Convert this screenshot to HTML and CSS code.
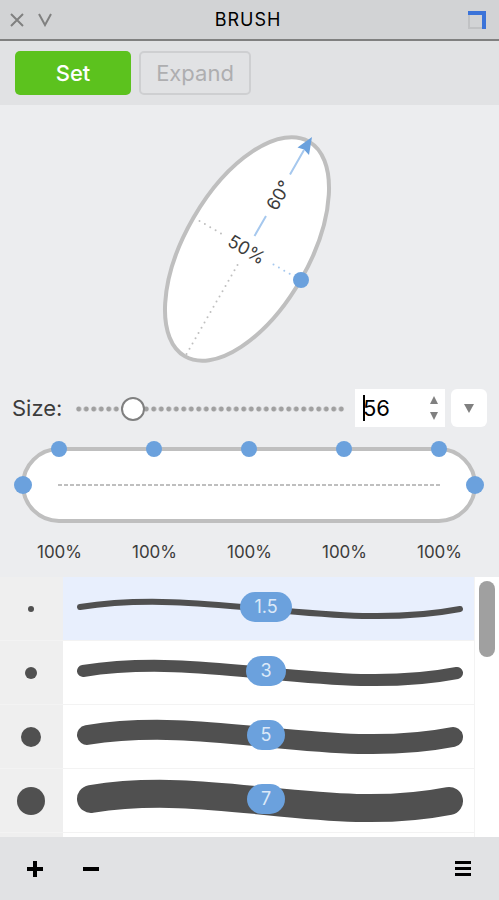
FILE: index.html
```html
<!DOCTYPE html>
<html lang="en">

<head>
    <meta charset="UTF-8">
    <meta name="viewport" content="width=device-width, initial-scale=1.0">
    <title>Brush</title>

    <link rel="stylesheet" href="styles.css">
</head>

<body>
    <header id="titlebar">
        <div class="window_btns">
            <button aria-label="Close">
                <svg width="14" height="14" viewBox="0 0 14 14"><path d="M1 1L13 13M13 1L1 13"/></svg>
            </button>
            <button aria-label="Collapse">
                <svg width="14" height="14" viewBox="0 0 14 14"><path d="M1 1L7 12L13 1"/></svg>
            </button>
        </div>
        <h1>BRUSH</h1>
        <button class="dock_btn" aria-label="Dock">
            <svg width="18" height="18" viewBox="0 0 18 18">
                <path d="M0 4h2v12h12v2H0z" fill="#c1c2c4"/>
                <path d="M0 0h18v18h-4V4H0z" fill="#3b73d9"/>
            </svg>
        </button>
    </header>

    <div id="toolbar">
        <button class="btn_set">Set</button>
        <button class="btn_expand" disabled>Expand</button>
    </div>

    <main>
        <svg id="shape" width="199" height="240" viewBox="0 0 199 240">
            <ellipse cx="97" cy="120" rx="124" ry="62" transform="rotate(-60 97 120)" fill="#fff" stroke="#bfbfbf" stroke-width="4"/>
            <g fill="none" stroke-width="2" stroke-linecap="round">
                <path d="M87.5 136L36.5 225" stroke="#bfbfbf" stroke-dasharray="0 6.03"/>
                <path d="M49.5 92L72 105" stroke="#bfbfbf" stroke-dasharray="0 6.2"/>
                <path d="M123.5 135.500L141 145.500" stroke="#a6c8ee" stroke-dasharray="0 6.2"/>
            </g>
            <path d="M104.500 107L116 87M140 45.500L154 21" stroke="#a6c8ee" stroke-width="2"/>
            <path d="M162 8L147.500 18.500L154 20.500L159 26z" fill="#6ba1dd"/>
            <circle cx="151" cy="151" r="8" fill="#6ba1dd"/>
            <text x="128" y="66" transform="rotate(-60 128 66)" dy="7">60°</text>
            <text x="97" y="120" transform="rotate(30 97 120)" dy="7">50%</text>
        </svg>

        <div id="size_row">
            <label for="size_range">Size:</label>
            <input type="range" id="size_range" min="0" max="300" value="56">
            <div class="size_box">
                <span class="caret"></span>
                <input type="text" id="size_value" value="56" aria-label="Size value">
                <div class="stepper">
                    <button aria-label="Increase"><svg width="10" height="8" viewBox="0 0 10 8"><path d="M5 0L9 8H1z"/></svg></button>
                    <button aria-label="Decrease"><svg width="10" height="8" viewBox="0 0 10 8"><path d="M1 0H9L5 8z"/></svg></button>
                </div>
            </div>
            <button class="btn_more" aria-label="Size presets"><svg width="10" height="9" viewBox="0 0 10 9"><path d="M0 0H10L5 9z"/></svg></button>
        </div>

        <div id="profile">
            <div class="top_handles"><i></i><i></i><i></i><i></i><i></i></div>
            <i class="end_handle left"></i>
            <div class="midline"></div>
            <i class="end_handle right"></i>
        </div>
        <div id="profile_values">
            <span>100%</span>
            <span>100%</span>
            <span>100%</span>
            <span>100%</span>
            <span>100%</span>
        </div>
    </main>

    <div id="brushes">
        <ul>
            <li class="selected">
                <div class="tip"><svg width="44" height="44"><circle cx="22" cy="22" r="3"/></svg></div>
                <div class="stroke">
                    <svg viewBox="0 0 411 63"><path d="M17 30C144 10 271 56 397 32" stroke-width="6"/></svg>
                    <span>1.5</span>
                </div>
            </li>
            <li>
                <div class="tip"><svg width="44" height="44"><circle cx="22" cy="22" r="6"/></svg></div>
                <div class="stroke">
                    <svg viewBox="0 0 411 63"><path d="M20 30C146 10 269 56 394 32" stroke-width="12"/></svg>
                    <span>3</span>
                </div>
            </li>
            <li>
                <div class="tip"><svg width="44" height="44"><circle cx="22" cy="22" r="10"/></svg></div>
                <div class="stroke">
                    <svg viewBox="0 0 411 63"><path d="M24 30C148 10 267 56 390 32" stroke-width="20"/></svg>
                    <span>5</span>
                </div>
            </li>
            <li>
                <div class="tip"><svg width="44" height="44"><circle cx="22" cy="22" r="14"/></svg></div>
                <div class="stroke">
                    <svg viewBox="0 0 411 63"><path d="M28 30C150 10 265 56 386 32" stroke-width="28"/></svg>
                    <span>7</span>
                </div>
            </li>
            <li>
                <div class="tip"><svg width="44" height="44"><circle cx="22" cy="22" r="20"/></svg></div>
                <div class="stroke">
                    <svg viewBox="0 0 411 63"><path d="M34 30C152 10 263 56 380 32" stroke-width="41"/></svg>
                </div>
            </li>
        </ul>
        <div class="scrollbar"><div class="thumb"></div></div>
    </div>

    <footer>
        <button aria-label="Add brush"><svg width="16" height="16" viewBox="0 0 16 16"><path d="M6 0h4v6h6v4h-6v6H6v-6H0V6h6z"/></svg></button>
        <button aria-label="Remove brush"><svg width="16" height="16" viewBox="0 0 16 16"><path d="M0 6h16v4H0z"/></svg></button>
        <button class="btn_menu" aria-label="Menu"><svg width="16" height="16" viewBox="0 0 16 16"><path d="M0 0h16v3H0zM0 6h16v3H0zM0 12h16v3H0z"/></svg></button>
    </footer>
</body>

</html>
```
FILE: styles.css
```css
* {
    box-sizing: border-box;
}

body {
    display: flex;
    flex-direction: column;
    margin: 0;
    height: 100vh;
    font-family: Inter, "Liberation Sans", sans-serif;
    background-color: #ecedef;
    color: #3c3c3c;
}

button {
    display: flex;
    align-items: center;
    justify-content: center;
    padding: 0;
    border: none;
    background: none;
    font-family: inherit;
}

#titlebar {
    display: grid;
    grid-template-columns: 1fr auto 1fr;
    align-items: center;
    height: 41px;
    padding: 0 13px 0 10px;
    background-color: #d2d3d5;
    border-bottom: 2px solid #808080;
}

#titlebar h1 {
    margin: 0;
    font-size: 18px;
    font-weight: 400;
    letter-spacing: 1px;
    color: black;
}

.window_btns {
    display: flex;
    gap: 14px;
}

.window_btns path {
    fill: none;
    stroke: #808080;
    stroke-width: 2;
}

.dock_btn {
    justify-self: end;
}

#toolbar {
    display: flex;
    gap: 8px;
    height: 64px;
    padding: 10px 15px;
    background-color: #e1e2e4;
}

#toolbar button {
    height: 44px;
    border-radius: 5px;
    font-size: 22px;
}

#toolbar .btn_set {
    width: 116px;
    background-color: #5cc21e;
    color: white;
    font-weight: 500;
}

#toolbar .btn_expand {
    width: 112px;
    border: 2px solid #cecfd1;
    color: #aeaeb0;
}

#shape {
    display: block;
    margin: 24px auto 20px;
}

#shape text {
    font-size: 18px;
    text-anchor: middle;
    fill: #3c3c3c;
}

#size_row {
    display: flex;
    align-items: center;
    height: 38px;
    padding: 0 12px;
}

#size_row label {
    width: 63px;
    font-size: 22px;
}

#size_range {
    flex: 1;
    min-width: 0;
    height: 24px;
    margin: 1px 10px 0 0;
    appearance: none;
    background: radial-gradient(circle, #a0a0a0 2px, transparent 3px) 0 0 / calc(100% / 36) 100%;
}

#size_range::-webkit-slider-thumb {
    appearance: none;
    width: 24px;
    height: 24px;
    border: 2px solid #808080;
    border-radius: 50%;
    background-color: white;
}

.size_box {
    position: relative;
    display: flex;
    width: 90px;
    height: 38px;
    margin-right: 6px;
    background-color: white;
}

#size_value {
    flex: 1;
    min-width: 0;
    padding: 0 0 0 8px;
    border: none;
    background: none;
    font-family: inherit;
    font-size: 22px;
    color: black;
}

.caret {
    position: absolute;
    left: 8px;
    top: 6px;
    width: 2px;
    height: 26px;
    background-color: black;
}

.stepper {
    display: flex;
    flex-direction: column;
    justify-content: center;
    gap: 8px;
    width: 22px;
}

.stepper path,
.btn_more path {
    fill: #808080;
}

.btn_more {
    width: 36px;
    height: 38px;
    border-radius: 6px;
    background-color: white;
}

#profile {
    position: relative;
    display: flex;
    align-items: center;
    height: 76px;
    margin: 20px 22px 0 21px;
    padding: 0 33px;
    border: 4px solid #bfbfbf;
    border-radius: 38px;
    background-color: white;
}

.midline {
    flex: 1;
    height: 2px;
    background: repeating-linear-gradient(to right, #bfbfbf 0 4px, transparent 4px 6px);
}

/* width handles sit on the outline */
.top_handles {
    position: absolute;
    top: -10px;
    left: 26px;
    right: 26px;
    display: flex;
    justify-content: space-between;
}

.top_handles i {
    width: 16px;
    height: 16px;
    border-radius: 50%;
    background-color: #6ba1dd;
}

.end_handle {
    position: absolute;
    width: 18px;
    height: 18px;
    border-radius: 50%;
    background-color: #6ba1dd;
}

.end_handle.left {
    left: -11px;
}

.end_handle.right {
    right: -11px;
}

#profile_values {
    display: grid;
    grid-template-columns: repeat(5, 1fr);
    padding: 0 12px;
    height: 54px;
    line-height: 58px;
    font-size: 17px;
    text-align: center;
}

#brushes {
    display: flex;
    flex: 1;
    min-height: 0;
    overflow: hidden;
    background-color: white;
}

#brushes ul {
    flex: 1;
    margin: 0;
    padding: 0;
    list-style: none;
    border-right: 1px solid #f3f3f3;
}

#brushes li {
    display: flex;
    height: 64px;
    border-bottom: 1px solid #f3f3f3;
}

#brushes .selected .stroke {
    background-color: #e8effd;
}

.tip {
    display: flex;
    align-items: center;
    justify-content: center;
    width: 63px;
    padding-right: 1px;
    background-color: #efefef;
}

.tip circle {
    fill: #505050;
}

.stroke {
    position: relative;
    flex: 1;
    display: flex;
    align-items: center;
    justify-content: center;
    padding: 0 5px 3px 0;
}

.stroke svg {
    position: absolute;
    top: 0;
    left: 0;
    width: 100%;
    height: 63px;
}

.stroke path {
    fill: none;
    stroke: #505050;
    stroke-linecap: round;
}

.stroke span {
    position: relative;
    min-width: 37px;
    height: 30px;
    padding: 0 14px;
    border-radius: 15px;
    background-color: #6ba1dd;
    color: #dce9f8;
    font-size: 18px;
    line-height: 30px;
    text-align: center;
}

.scrollbar {
    width: 24px;
    padding: 4px;
}

.thumb {
    height: 76px;
    border-radius: 8px;
    background-color: #a0a0a0;
}

footer {
    display: flex;
    align-items: center;
    gap: 40px;
    height: 63px;
    padding: 0 28px 0 27px;
    background-color: #e1e2e4;
}

.btn_menu {
    margin-left: auto;
}
```
